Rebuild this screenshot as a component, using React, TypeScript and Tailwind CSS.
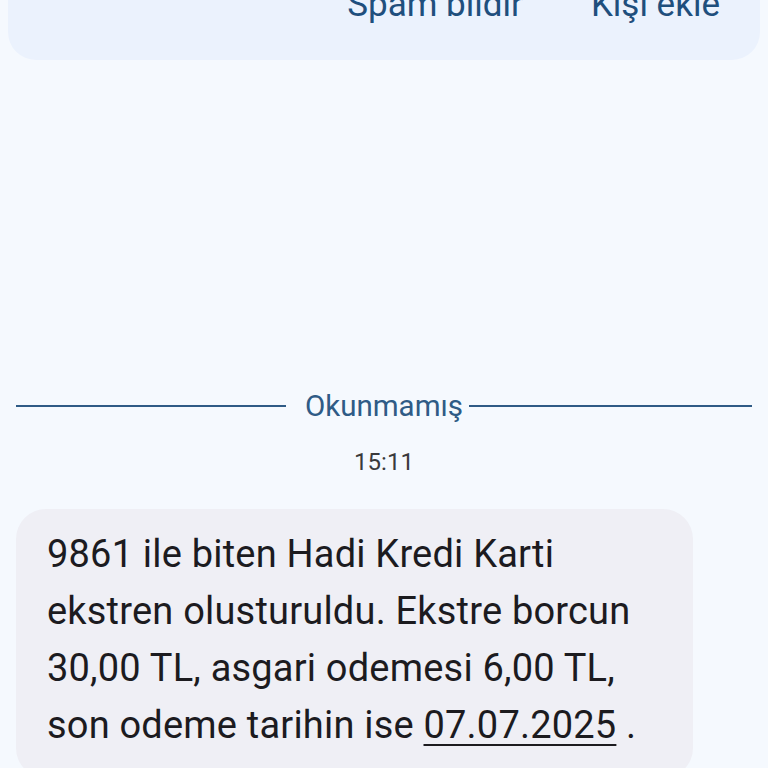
export default function App() {
    return (
        <div className="w-[768px] h-[768px] overflow-hidden bg-[#f5f9fe] font-['Roboto','Noto_Sans',sans-serif]">
            {/* Sender card, scrolled so only its bottom shows */}
            <div className="mx-2 -mt-10 h-[100px] rounded-[28px] bg-[#ebf2fd] flex items-start justify-end gap-[68px] pr-10 pt-[25px]">
                <span className="text-[35px] leading-[40px] text-[#1f4f7d]">Spam bildir</span>
                <span className="text-[35px] leading-[40px] text-[#1f4f7d]">Kişi ekle</span>
            </div>

            {/* Unread divider */}
            <div className="mt-[329px] px-4 grid grid-cols-[1fr_auto_1fr] items-center">
                <div className="mr-[19px] h-[2px] bg-[#2f5b86]" />
                <span className="text-[29.5px] leading-[34px] text-[#2f5b86]">Okunmamış</span>
                <div className="ml-[6px] h-[2px] bg-[#2f5b86]" />
            </div>

            <div className="mt-[25px] text-center text-[24px] leading-[28px] text-[#3a3a3c]">15:11</div>

            {/* Message bubble */}
            <div className="mt-[33px] ml-4 w-[677px] rounded-[30px] bg-[#efeff5] pl-[31px] pr-[40px] pt-[17px] pb-6">
                <p className="text-[38px] leading-[57px] tracking-[0.2px] text-[#1c1b1f]">
                    9861 ile biten Hadi Kredi Karti ekstren olusturuldu. Ekstre borcun 30,00 TL, asgari odemesi 6,00 TL, son odeme tarihin ise{' '}
                    <span className="underline underline-offset-[6px] decoration-2">07.07.2025</span> .
                </p>
            </div>
        </div>
    );
}
